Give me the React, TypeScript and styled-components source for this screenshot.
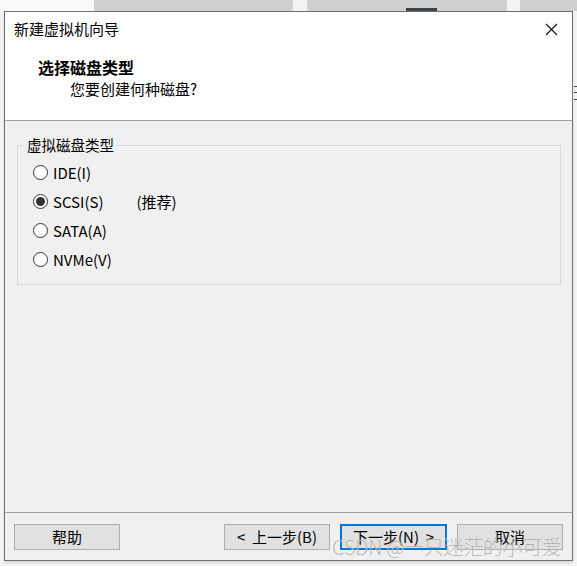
import React from "react";
import styled, { createGlobalStyle } from "styled-components";

const Global = createGlobalStyle`
  html, body { margin: 0; padding: 0; background: #f6f6f6; }
  body { font-family: "Noto Sans CJK SC", "Noto Sans", sans-serif; color: #000; }
  * { box-sizing: border-box; }
`;

const Page = styled.div`
  position: relative;
  width: 577px;
  height: 566px;
  overflow: hidden;
  background: #f4f4f4;
  display: flex;
  flex-direction: column;
`;

const BackStrip = styled.div`
  height: 11px;
  display: flex;
  flex: none;
`;

const StripSeg = styled.div<{ $w: number; $tone: "light" | "dark" | "white" }>`
  width: ${(p) => p.$w}px;
  flex: none;
  background: ${(p) =>
    p.$tone === "dark" ? "#cfcfcf" : p.$tone === "light" ? "#f2f2f2" : "#fafafa"};
  position: relative;
`;

const TaskMark = styled.div`
  position: absolute;
  left: 99px;
  bottom: 0;
  width: 31px;
  height: 3px;
  background: #3d4247;
`;

const Window = styled.div`
  margin-left: 4px;
  width: 569px;
  height: 550px;
  flex: none;
  border: 1px solid #6f6f6f;
  display: flex;
  flex-direction: column;
  background: #f0f0f0;
  box-shadow: 0 2px 3px rgba(0, 0, 0, 0.12);
`;

const Header = styled.div`
  background: #fff;
  height: 109px;
  flex: none;
  border-bottom: 1px solid #a0a0a0;
  display: flex;
  flex-direction: column;
`;

const TitleBar = styled.div`
  height: 34px;
  display: flex;
  align-items: center;
  justify-content: space-between;
  padding: 0 14px 0 9px;
`;

const TitleText = styled.div`
  font-size: 15px;
  line-height: 20px;
  color: #000;
`;

const CloseIcon = styled.svg`
  width: 13px;
  height: 13px;
  display: block;
`;

const Heading = styled.div`
  margin: 11px 0 0 33px;
  font-size: 16px;
  line-height: 20px;
  font-weight: 700;
`;

const SubHeading = styled.div`
  margin: 2px 0 0 65px;
  font-size: 15px;
  line-height: 20px;
`;

const Body = styled.div`
  flex: 1;
  padding: 16px 11px 0 12px;
  border-bottom: 1px solid #a0a0a0;
`;

const Group = styled.fieldset`
  margin: 0;
  padding: 5px 0 9px 15px;
  border: 1px solid #dadada;
  height: 148px;
  display: flex;
  flex-direction: column;
`;

const Legend = styled.legend`
  margin-left: -9px;
  padding: 0 3px;
  font-size: 14.5px;
  line-height: 16px;
  color: #000;
`;

const Row = styled.label`
  height: 29px;
  display: flex;
  align-items: center;
  font-size: 15px;
  color: #000;
`;

const Radio = styled.span<{ $checked?: boolean }>`
  width: 15px;
  height: 15px;
  border-radius: 50%;
  border: 1px solid #333;
  background: #fff;
  margin-right: 5px;
  display: flex;
  align-items: center;
  justify-content: center;
  flex: none;
  &::after {
    content: "";
    width: 9px;
    height: 9px;
    border-radius: 50%;
    background: ${(p) => (p.$checked ? "#333" : "transparent")};
  }
`;

const Note = styled.span`
  margin-left: 33px;
`;

const Footer = styled.div`
  height: 47px;
  flex: none;
  display: flex;
  align-items: flex-start;
  padding: 11px 9px 0 9px;
  gap: 10px;
`;

const Button = styled.button<{ $primary?: boolean; $push?: boolean; $w?: number }>`
  width: ${(p) => p.$w ?? 106}px;
  height: 26px;
  padding: 0;
  margin-right: ${(p) => (p.$push ? "auto" : "0")};
  background: #e1e1e1;
  border: ${(p) => (p.$primary ? "2px solid #0078d7" : "1px solid #adadad")};
  font-family: "Noto Sans CJK SC", "Noto Sans", sans-serif;
  font-size: 15px;
  line-height: 20px;
  color: #000;
  white-space: pre;
`;

const Watermark = styled.div`
  position: absolute;
  left: 332px;
  top: 533px;
  font-family: "Noto Sans CJK SC", sans-serif;
  font-weight: 300;
  font-size: 20px;
  line-height: 28px;
  letter-spacing: -0.3px;
  color: rgba(120, 120, 120, 0.55);
  text-shadow: 0 0 1px rgba(255, 255, 255, 0.9);
  pointer-events: none;
  white-space: nowrap;
`;

const EdgeMark = styled.div`
  position: absolute;
  left: 574px;
  top: 86px;
  width: 3px;
  height: 14px;
  border-top: 1px solid #444;
  border-bottom: 1px solid #444;
  &::after {
    content: "";
    display: block;
    margin-top: 5px;
    border-top: 1px solid #444;
  }
`;

const options = [
  { label: "IDE(I)" },
  { label: "SCSI(S)", checked: true, note: "(推荐)" },
  { label: "SATA(A)" },
  { label: "NVMe(V)" },
];

export default function App() {
  return (
    <>
      <Global />
      <Page>
        <BackStrip>
          <StripSeg $w={94} $tone="white" />
          <StripSeg $w={199} $tone="dark" />
          <StripSeg $w={14} $tone="light" />
          <StripSeg $w={200} $tone="dark">
            <TaskMark />
          </StripSeg>
          <StripSeg $w={13} $tone="light" />
          <StripSeg $w={57} $tone="dark" />
        </BackStrip>
        <Window>
          <Header>
            <TitleBar>
              <TitleText>新建虚拟机向导</TitleText>
              <CloseIcon viewBox="0 0 13 13">
                <path d="M1 1 L12 12 M12 1 L1 12" stroke="#111" strokeWidth="1.1" fill="none" />
              </CloseIcon>
            </TitleBar>
            <Heading>选择磁盘类型</Heading>
            <SubHeading>您要创建何种磁盘?</SubHeading>
          </Header>
          <Body>
            <Group>
              <Legend>虚拟磁盘类型</Legend>
              {options.map((o) => (
                <Row key={o.label}>
                  <Radio $checked={o.checked} />
                  {o.label}
                  {o.note && <Note>{o.note}</Note>}
                </Row>
              ))}
            </Group>
          </Body>
          <Footer>
            <Button $push>帮助</Button>
            <Button>{"<  上一步(B)"}</Button>
            <Button $primary $w={107}>{"下一步(N)  >"}</Button>
            <Button>取消</Button>
          </Footer>
        </Window>
        <EdgeMark />
        <Watermark>CSDN @一只迷茫的小可爱</Watermark>
      </Page>
    </>
  );
}
